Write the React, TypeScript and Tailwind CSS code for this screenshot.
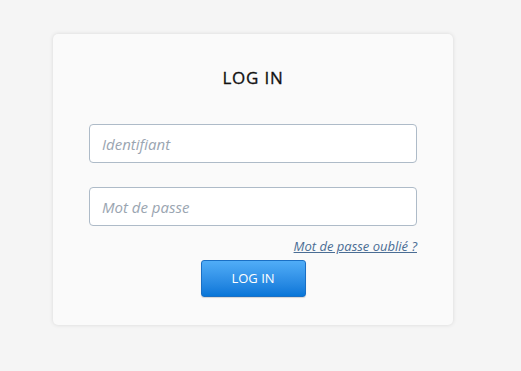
export default function App() {
	return (
		<div className="min-h-screen bg-[#f5f5f5] pt-[34px] pl-[53px] font-['Open_Sans',sans-serif]">
			<div className="w-[400px] h-[291px] bg-[#fafafa] rounded-[5px] shadow-[0_0_4px_rgba(0,0,0,0.12)] px-[36px] pt-[33px]">
				<h1 className="text-center text-[17px] leading-[22px] font-normal text-[#111] tracking-[0.8px] [-webkit-text-stroke:0.3px_#111]">
					LOG IN
				</h1>
				<form className="mt-[35px] flex flex-col">
					<input
						type="text"
						placeholder="Identifiant"
						className="h-[39px] w-full rounded-[4px] border border-[#aebbc8] bg-white px-[12px] text-[15px] italic text-[#333] placeholder:text-[#9aa5b1] outline-none"
					/>
					<input
						type="password"
						placeholder="Mot de passe"
						className="mt-[24px] h-[39px] w-full rounded-[4px] border border-[#aebbc8] bg-white px-[12px] text-[15px] italic text-[#333] placeholder:text-[#9aa5b1] outline-none"
					/>
					<div className="mt-[12px] flex justify-end">
						<a
							href="#"
							className="text-[13px] leading-[16px] italic underline text-[#4a6d94]"
						>
							Mot de passe oublié ?
						</a>
					</div>
					<div className="mt-[6px] flex justify-center">
						<button
							type="button"
							className="h-[37px] w-[105px] rounded-[3px] border border-[#1a6fc4] bg-gradient-to-b from-[#50adf7] to-[#0676d8] text-[13px] text-white shadow-[0_1px_1px_rgba(0,0,0,0.15)]"
						>
							LOG IN
						</button>
					</div>
				</form>
			</div>
		</div>
	);
}
